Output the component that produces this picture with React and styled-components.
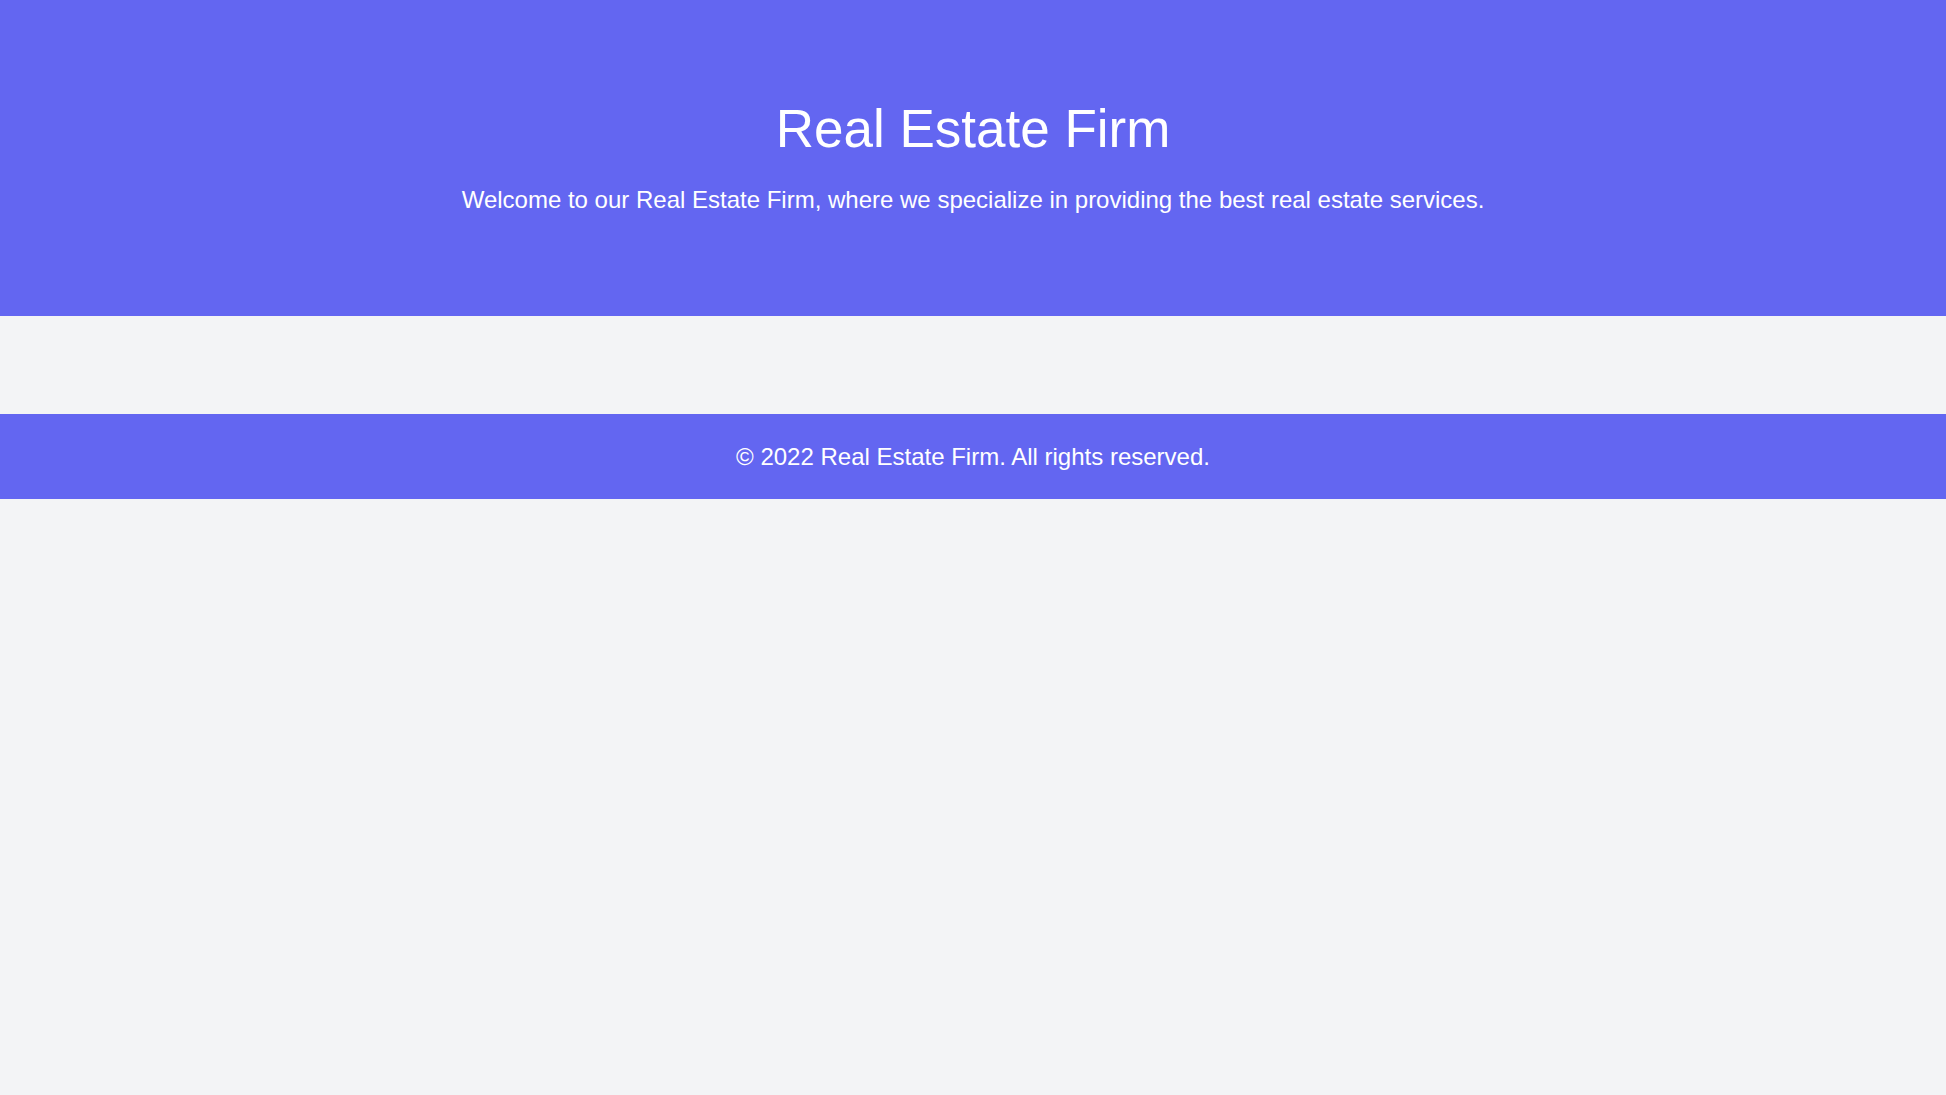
import React from "react";
import styled, { createGlobalStyle } from "styled-components";

const GlobalStyle = createGlobalStyle`
  html, body {
    margin: 0;
    padding: 0;
    background: #f3f4f6;
    font-family: "Liberation Sans", Arial, sans-serif;
  }
`;

export default function App() {
  return (
    <>
      <GlobalStyle />
      <Header>
        <Title>Real Estate Firm</Title>
        <Lead>
          Welcome to our Real Estate Firm, where we specialize in providing the best real estate services.
        </Lead>
      </Header>
      <Main />
      <Footer>
        <FooterText>© 2022 Real Estate Firm. All rights reserved.</FooterText>
      </Footer>
    </>
  );
}

const Header = styled.header`
  background: #6366f1;
  color: #ffffff;
  text-align: center;
  padding: 103px 0 100px;
`;
const Title = styled.h1`
  margin: 0;
  font-size: 53px;
  line-height: 52px;
  font-weight: 400;
`;
const Lead = styled.p`
  margin: 29px 0 0;
  font-size: 24px;
  line-height: 32px;
`;
const Main = styled.main`
  height: 98px;
`;
const Footer = styled.footer`
  background: #6366f1;
  color: #ffffff;
  text-align: center;
  padding: 27px 0 26px;
`;
const FooterText = styled.p`
  margin: 0;
  font-size: 24px;
  line-height: 32px;
`;
